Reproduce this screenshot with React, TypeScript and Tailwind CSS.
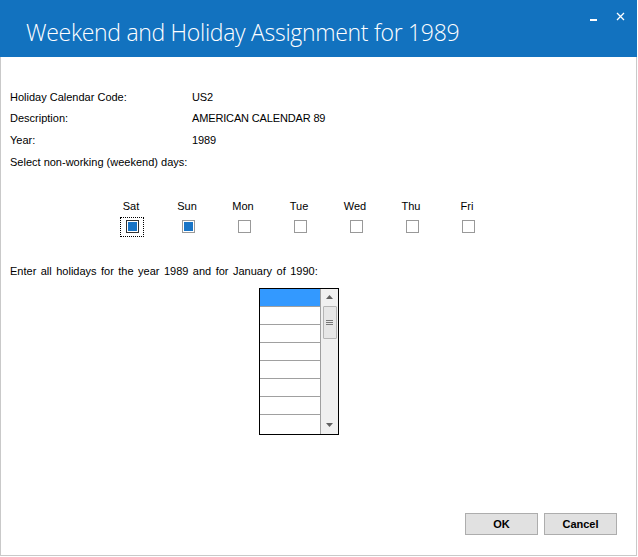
const DAYS = ["Sat", "Sun", "Mon", "Tue", "Wed", "Thu", "Fri"];

const INFO = [
  ["Holiday Calendar Code:", "US2"],
  ["Description:", "AMERICAN CALENDAR 89"],
  ["Year:", "1989"],
];

export default function App() {
  return (
    <div className="w-[638px] h-[557px] bg-white text-[11px] text-black [font-family:'Liberation_Sans',Arial,sans-serif]">
      <div className="w-[637px] h-[556px] flex flex-col">
        <TitleBar />
        <div className="flex-1 flex flex-col border-x border-b border-[#c9c9c9] pl-[9px] pt-[29px] pr-[19px] pb-[20px]">
          {/* header fields */}
          <div className="grid grid-cols-[182px_1fr] auto-rows-[21.7px] items-center">
            {INFO.map(([label, value]) => (
              <>
                <div key={label}>{label}</div>
                <div key={label + "v"} className="tracking-[-0.15px]">{value}</div>
              </>
            ))}
            <div className="col-span-2">Select non-working (weekend) days:</div>
          </div>

          {/* weekend days */}
          <div className="mt-[25px] ml-[94px] grid grid-cols-[repeat(7,56px)]">
            {DAYS.map((d, i) => (
              <DayBox key={d} label={d} checked={i < 2} focused={i === 0} />
            ))}
          </div>

          <div className="mt-[26px] h-[16px] leading-[16px] [word-spacing:1.4px]">
            Enter all holidays for the year 1989 and for January of 1990:
          </div>

          <HolidayList />

          {/* buttons */}
          <div className="mt-auto flex justify-end gap-[6px]">
            <DialogButton label="OK" />
            <DialogButton label="Cancel" />
          </div>
        </div>
      </div>
    </div>
  );
}

// title bar
const TitleBar = () => {
  return (
    <div className="relative h-[57px] shrink-0 bg-[#1272bf] text-white">
      <div className="pl-[26px] pt-[15px] text-[23px] leading-[34px] font-light [font-family:'Open_Sans',sans-serif] tracking-[-0.3px]">
        Weekend and Holiday Assignment for 1989
      </div>
      {/* window controls */}
      <div className="absolute top-[19px] left-[590px] w-[7px] h-[2px] bg-white" />
      <svg className="absolute top-[12px] left-[616px]" width="9" height="9" viewBox="0 0 9 9">
        <path d="M1 1 L8 8 M8 1 L1 8" stroke="white" strokeWidth="1.3" />
      </svg>
    </div>
  );
};

// one weekday checkbox with label above
const DayBox = ({ label, checked, focused }: { label: string; checked: boolean; focused: boolean }) => {
  return (
    <div className="flex flex-col items-center">
      <div className="h-[16px] leading-[16px] -translate-x-[1px]">{label}</div>
      <div
        className={
          "mt-[3px] w-[24px] h-[20px] flex items-center justify-center " +
          (focused ? "border border-dotted border-black" : "border border-transparent")
        }
      >
        <div
          className={
            "w-[13px] h-[13px] border bg-white p-px " +
            (focused ? "border-[#333333]" : "border-[#999999]")
          }
        >
          {checked && <div className="w-full h-full bg-[#1874c6]" />}
        </div>
      </div>
    </div>
  );
};

// holiday list with scrollbar
const HolidayList = () => {
  const rows = [0, 1, 2, 3, 4, 5, 6, 7];
  return (
    <div className="mt-[9px] ml-[249px] w-[80px] h-[147px] border border-black flex">
      <div className="w-[60px] flex flex-col overflow-hidden">
        {rows.map((r) => (
          <div
            key={r}
            className={
              "h-[18px] shrink-0 " +
              (r < 7 ? "border-b border-[#a0a0a0] " : "") +
              (r === 0 ? "bg-[#3399ff]" : "bg-white")
            }
          />
        ))}
      </div>
      <div className="w-px bg-[#a0a0a0]" />
      <div className="w-[17px] bg-[#f0f0f0] flex flex-col items-center">
        <svg className="mt-[6px]" width="7" height="4" viewBox="0 0 7 4">
          <path d="M3.5 0 L7 4 L0 4 Z" fill="#606060" />
        </svg>
        <div className="mt-[7px] w-[14px] h-[33px] bg-[#e6e6e6] border border-[#b5b5b5] rounded-[1px] flex flex-col items-center justify-center gap-[1px]">
          <div className="w-[7px] h-px bg-[#777777]" />
          <div className="w-[7px] h-px bg-[#777777]" />
          <div className="w-[7px] h-px bg-[#777777]" />
        </div>
        <svg className="mt-auto mb-[7px]" width="7" height="4" viewBox="0 0 7 4">
          <path d="M0 0 L7 0 L3.5 4 Z" fill="#606060" />
        </svg>
      </div>
    </div>
  );
};

const DialogButton = ({ label }: { label: string }) => {
  return (
    <button className="w-[73px] h-[22px] bg-[#e1e1e1] border border-[#adadad] font-bold text-[11px] [font-family:'Liberation_Sans',Arial,sans-serif]">
      {label}
    </button>
  );
};
